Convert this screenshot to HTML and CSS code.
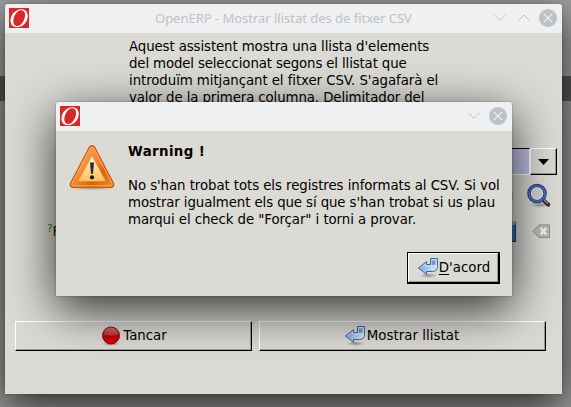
FILE: index.html
```html
<!DOCTYPE html>
<html lang="ca">
<head>
<meta charset="utf-8">
<title>OpenERP</title>
<link rel="stylesheet" href="styles.css">
</head>
<body>
<svg class="defs" width="0" height="0" aria-hidden="true">
  <defs>
    <linearGradient id="blue" x1="0" y1="0" x2="1" y2="0.3"><stop offset="0" stop-color="#6799cf"/><stop offset="1" stop-color="#d7e5f6"/></linearGradient>
    <linearGradient id="red" x1="0" y1="0" x2="0" y2="1"><stop offset="0" stop-color="#d45252"/><stop offset=".45" stop-color="#b51012"/><stop offset=".55" stop-color="#c20000"/><stop offset="1" stop-color="#ed0000"/></linearGradient>
    <linearGradient id="orange" x1="0" y1="0" x2="1" y2="1"><stop offset="0" stop-color="#ffad62"/><stop offset=".5" stop-color="#ef882d"/><stop offset=".7" stop-color="#dc6500"/><stop offset="1" stop-color="#ef8d39"/></linearGradient>
    <linearGradient id="cream" x1="0" y1="0" x2="0" y2="1"><stop offset="0" stop-color="#fff0d7"/><stop offset="1" stop-color="#ffc05b"/></linearGradient>
    <radialGradient id="soft"><stop offset="0" stop-color="#000" stop-opacity=".35"/><stop offset="1" stop-color="#000" stop-opacity="0"/></radialGradient>
    <symbol id="logo" viewBox="0 0 20 20">
      <rect width="20" height="20" fill="#dc2626"/>
      <path fill="#fff" fill-rule="evenodd" d="M12.2 1.2C16.4 1.1 19 4 18.8 8.3C18.5 14.2 13.8 19.2 8.2 19.2C3.7 19.2 1.3 16.3 1.5 12C1.8 6.1 6.7 1.3 12.2 1.2ZM12 2.3C8 2.3 4.5 8.2 4.3 13.2C4.2 16.4 5.8 18 8.4 18C12.5 18 15.9 12.2 16.1 7.1C16.2 3.9 14.6 2.3 12 2.3Z"/>
    </symbol>
    <symbol id="enter" viewBox="0 0 22 22">
      <ellipse cx="11.5" cy="18.5" rx="9" ry="2.5" fill="url(#soft)"/>
      <path d="M1.3 11L9.5 4.6V7.5H13.5V1.5H20.5V9.5C20.5 12.5 18.5 14.5 15.5 14.5H9.5V17.3Z" fill="url(#blue)" stroke="#3a68a3"/>
      <path d="M14.5 2.5H19.5V8.5" fill="none" stroke="#c4dbf3"/>
      <path d="M15 3.5H18.5V7.5L15 8Z" fill="#7596bd"/>
      <path d="M3.2 11L8.6 6.8V9H14.5" fill="none" stroke="#fff" stroke-opacity=".4"/>
    </symbol>
    <symbol id="close" viewBox="0 0 18 18">
      <circle cx="9" cy="9" r="9" fill="#bcc1c5"/>
      <path d="M4.8 4.8L13.2 13.2M13.2 4.8L4.8 13.2" stroke="#f4f5f6" stroke-width="1.1"/>
    </symbol>
    <symbol id="down" viewBox="0 0 12 12"><path d="M.6 3L6 8.4L11.4 3" fill="none" stroke="#bdc2c6"/></symbol>
    <symbol id="up" viewBox="0 0 12 12"><path d="M.6 8.4L6 3L11.4 8.4" fill="none" stroke="#bdc2c6"/></symbol>
  </defs>
</svg>
<div class="window">
  <header class="titlebar">
    <svg class="logo"><use href="#logo"/></svg>
    <span class="title">OpenERP - Mostrar llistat des de fitxer CSV</span>
    <div class="controls"><svg class="chevron"><use href="#down"/></svg><svg class="chevron"><use href="#up"/></svg><svg class="close"><use href="#close"/></svg></div>
  </header>
  <main class="content">
    <p class="intro"><span class="tight">Aquest assistent mostra una llista d'elements</span><br><span class="tighter">del model seleccionat segons el llistat que</span><br><span class="snug">introduïm mitjançant el fitxer CSV. S'agafarà el</span><br><span class="tight">valor de la primera columna. Delimitador del</span></p>
    <div class="fields">
      <div class="combo"><span class="entry"></span><span class="drop"><svg width="11" height="6"><path d="M0 0H11L5.5 6Z"/></svg></span></div>
      <div class="search-row">
        <span class="sliver"></span>
        <svg class="search" viewBox="0 0 26 26">
          <ellipse cx="14" cy="22" rx="10" ry="3" fill="url(#soft)"/>
          <path d="M16.5 16.5L22.2 21.5" stroke="#333" stroke-width="4.2" stroke-linecap="round"/>
          <path d="M17.5 16.5L22 20.5" stroke="#999" stroke-width="1.2"/>
          <circle cx="11" cy="10.5" r="8" fill="#d2d2cf" stroke="#233e82" stroke-width="3.6"/>
          <circle cx="11" cy="10.5" r="8" fill="none" stroke="#4d70c4" stroke-width="1.6"/>
          <circle cx="11" cy="10.5" r="5.8" fill="none" stroke="#eee" stroke-width=".8"/>
        </svg>
      </div>
      <div class="file-row">
        <span class="label"><sup>?</sup>F</span>
        <span class="file"></span>
        <svg class="clear" viewBox="0 0 19 15"><path d="M1 7.2L7 .9H17.5V13.6H7Z" fill="#b9bab6" stroke="#91938f"/><path d="M8.8 4L14 10.5M14 4L8.8 10.5" stroke="#f5f5f3" stroke-width="2.5"/></svg>
      </div>
    </div>
    <div class="actions">
      <button class="button cancel"><svg class="stop" viewBox="0 0 20 20"><ellipse cx="10" cy="18" rx="9" ry="2" fill="url(#soft)"/><circle cx="10" cy="9.5" r="8.5" fill="url(#red)" stroke="#8b0c0c"/><path d="M3 8.5A7 7 0 0 1 17 8.5Q10 10.5 3 8.5Z" fill="#fff" opacity=".17"/></svg><span>Tancar</span></button>
      <button class="button show"><svg class="enter"><use href="#enter"/></svg><span>Mostrar llistat</span></button>
    </div>
  </main>
</div>
<section class="dialog">
  <header class="titlebar">
    <svg class="logo"><use href="#logo"/></svg>
    <div class="controls"><svg class="chevron"><use href="#down"/></svg><svg class="close"><use href="#close"/></svg></div>
  </header>
  <div class="message">
    <svg class="warning" viewBox="0 0 48 48">
      <ellipse cx="24" cy="44.5" rx="23" ry="3" fill="url(#soft)"/>
      <g transform="translate(0 1.3)">
      <path d="M21.2 3.2Q24-.3 26.8 3.2L45.4 39Q46.6 43 42.8 43H5.2Q1.4 43 2.6 39Z" fill="url(#orange)" stroke="#c95d0c" stroke-width="1.3"/>
      <path d="M22.2 4Q24 1.5 25.8 4L44 39Q44.7 41.4 42.3 41.5H5.7Q3.3 41.4 4 39Z" fill="none" stroke="#f9aa66" stroke-width="1"/>
      <path d="M24 12L37.7 37H10.3Z" fill="url(#cream)"/>
      <path d="M22 18.2H26L25 29.5H23Z" fill="#292d2e"/><circle cx="24" cy="33" r="2.1" fill="#17191a"/>
      </g>
    </svg>
    <div class="copy"><h1>Warning !</h1><p><span class="snug">No s'han trobat tots els registres informats al CSV. Si vol</span><br><span class="tight">mostrar igualment els que sí que s'han trobat si us plau</span><br><span class="snug">marqui el check de "Forçar" i torni a provar.</span></p></div>
  </div>
  <div class="dialog-actions"><button class="button ok"><svg class="enter"><use href="#enter"/></svg><span><u>D</u>'acord</span></button></div>
</section>
</body>
</html>
```
FILE: styles.css
```css
* { box-sizing: border-box; }
body {
  margin: 0; width: 571px; height: 407px; overflow: hidden; position: relative;
  padding: 4px 9px 0 5px;
  background: linear-gradient(#a0a0a0 0 76px, #575757 76px 101px, #9a9a9a 101px);
  font: 13.33px/17px "DejaVu Sans", sans-serif; color: #000;
}
svg { display: block; flex: none; }
.defs { position: absolute; }
.window, .dialog { background: #dbdad5; border-radius: 3px 3px 0 0; }
.window { height: 390px; box-shadow: 0 12px 40px rgba(0,0,0,.75), 0 0 2px rgba(0,0,0,.3); }
.titlebar { height: 29px; display: flex; align-items: center; padding: 0 5px 1px 4px; background: #eff0f2; border-radius: 3px 3px 0 0; }
.logo { width: 20px; height: 20px; }
.title { flex: 1; padding-left: 126px; color: #bdc2c6; font: 13px/18px "Noto Sans", sans-serif; letter-spacing: -.02px; white-space: nowrap; }
.controls { display: flex; gap: 12px; align-items: center; margin-left: auto; }
.chevron { width: 12px; height: 12px; }
.close { width: 18px; height: 18px; margin-left: -3px; }
.content { display: flex; flex-direction: column; height: 361px; }
.intro { margin: 5px 0 0 124px; white-space: nowrap; }
.snug { letter-spacing: -.07px; }
.tight { letter-spacing: -.1px; }
.tighter { letter-spacing: -.14px; }
.fields { margin-top: 42px; height: 105px; }
.combo { display: flex; height: 27px; justify-content: flex-end; padding-right: 5px; }
.entry { width: 90px; background: #c3c3ea; border: 1px solid #000; border-right: 1px solid #fff; border-bottom: 1px solid #fff; }
.drop { width: 27px; display: grid; place-items: center; border: 1px solid #fff; border-right: 1px solid #000; border-bottom: 1px solid #000; box-shadow: inset -1px -1px #999790; }
.search-row { display: flex; justify-content: flex-end; align-items: center; height: 38px; padding: 3px 10px 0 0; }
.sliver { width: 2px; height: 8px; background: #cbbc96; margin-right: 13px; }
.search { width: 26px; height: 26px; }
.file-row { display: flex; align-items: center; height: 36px; padding: 0 11px 0 42px; }
.label { font-size: 13.33px; color: #3d1c12; }
.label sup { font-size: 10.5px; line-height: 0; color: #0c8a0c; vertical-align: 4px; }
.file { margin-left: auto; width: 24px; height: 21px; border: 1px solid #183969; border-top: 4px solid #aaa; background: #3474b8; }
.clear { width: 19px; height: 15px; margin-left: 16px; }
.actions { display: flex; gap: 7px; padding-left: 10px; margin-top: 68px; }
.button { appearance: none; display: flex; align-items: center; justify-content: center; margin: 0; padding: 0; height: 30px; background: #dbdad5; color: #000; font: inherit; border: 1px solid #fff; border-right-color: #000; border-bottom-color: #000; box-shadow: inset -1px -1px #9b9993; }
.actions span { margin-bottom: 2px; }
.cancel { width: 237px; gap: 2px; padding-left: 1px; }
.show { width: 287px; }
.stop { width: 20px; height: 20px; }
.enter { width: 22px; height: 22px; }
.show .enter { margin-left: -2px; }
.show span { padding-left: 1px; letter-spacing: .05px; }
.dialog { position: absolute; left: 56px; top: 102px; width: 456px; height: 194px; box-shadow: 0 13px 48px rgba(0,0,0,.8), 0 0 2px rgba(0,0,0,.4); }
.message { display: flex; padding: 12px 0 0 12px; gap: 12px; }
.warning { width: 48px; height: 48px; }
.copy { white-space: nowrap; }
h1 { font: bold 13.33px/17px "DejaVu Sans", sans-serif; margin: 0 0 17px; letter-spacing: .4px; }
.copy p { margin: 0; }
.dialog-actions { display: flex; justify-content: flex-end; padding: 24px 12px 0 0; }
.ok { width: 93px; height: 32px; padding-left: 1px; border-color: #000; border-width: 1px 2px 2px 1px; box-shadow: inset 1px 1px #fff, inset -1px -1px #9b9993; }
u { text-underline-offset: 2px; }
```
